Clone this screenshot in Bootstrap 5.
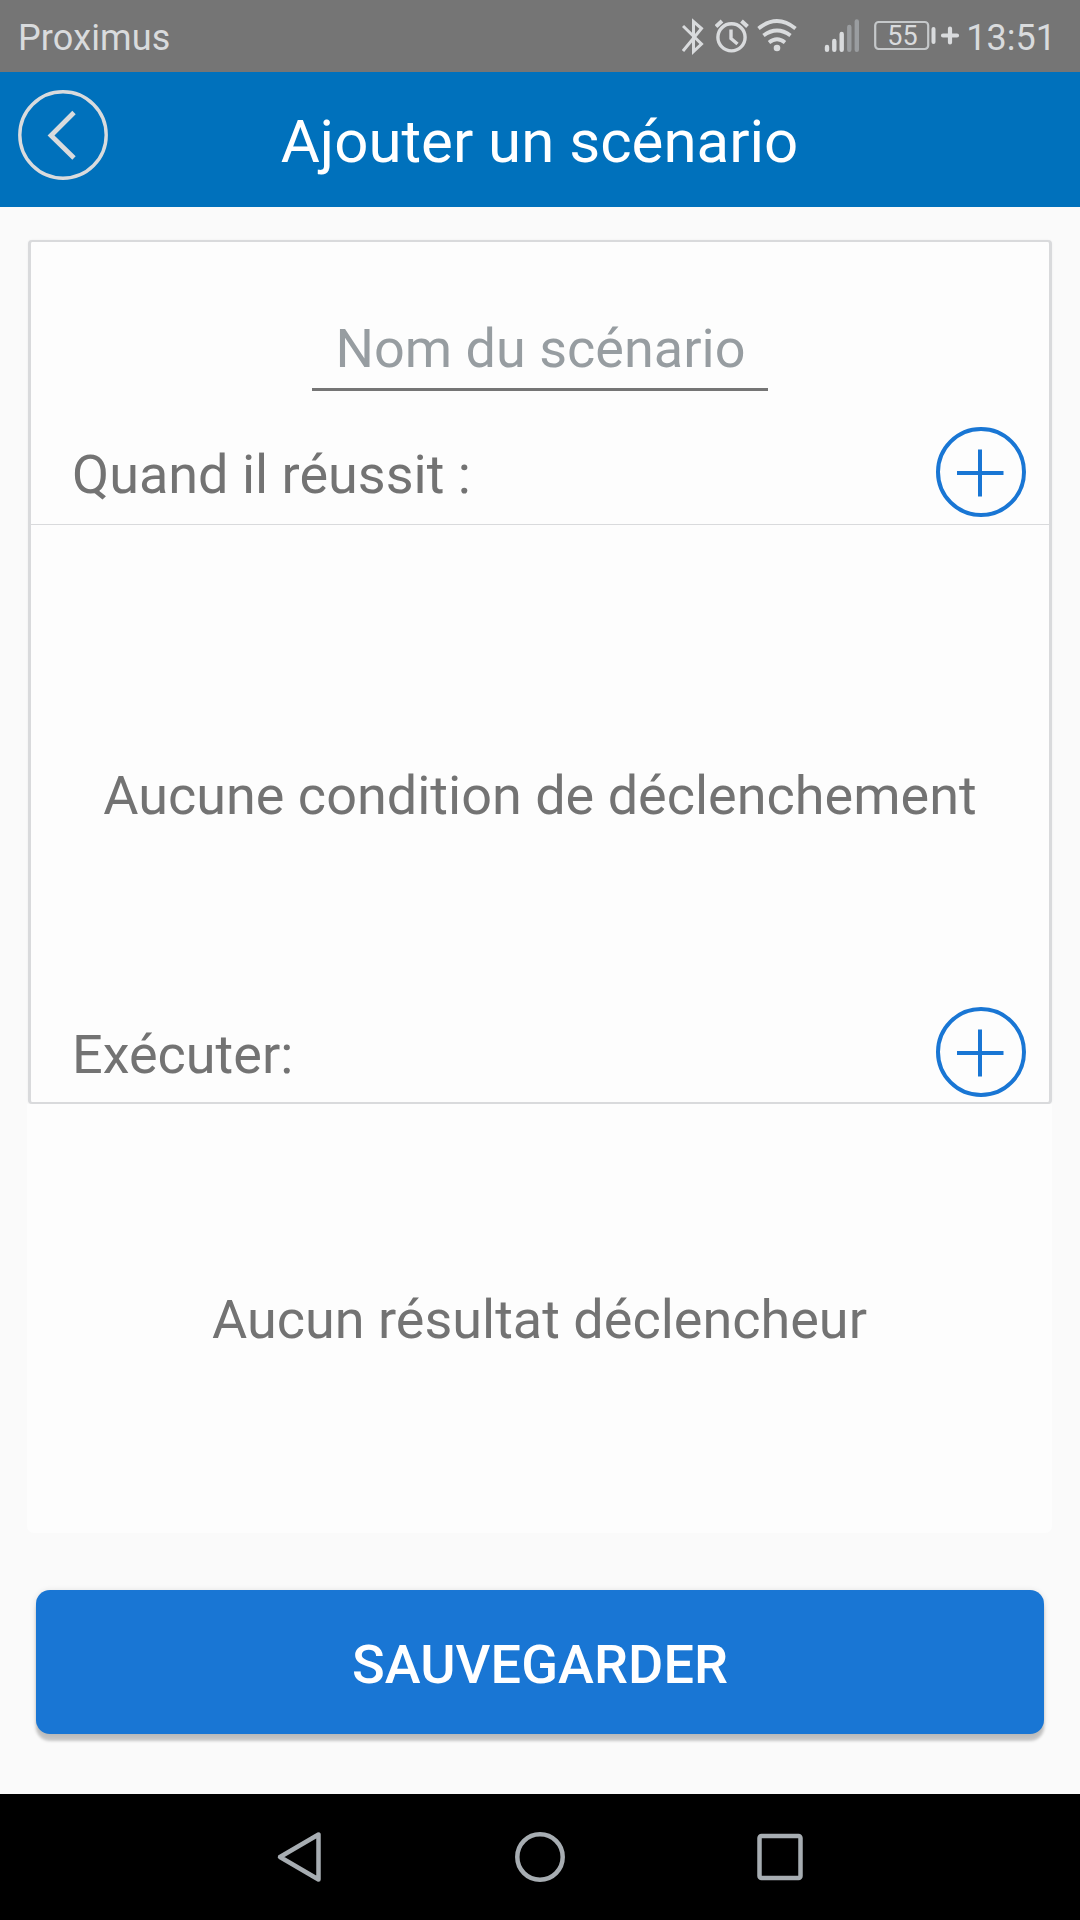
<!DOCTYPE html>
<html lang="fr">
<head>
<meta charset="utf-8">
<meta name="viewport" content="width=device-width, initial-scale=1">
<title>Ajouter un scénario</title>
<link href="https://cdn.jsdelivr.net/npm/bootstrap@5.3.0/dist/css/bootstrap.min.css" rel="stylesheet">
<style>
body { font-family: Roboto, "Liberation Sans", sans-serif; background: #fafafa; color: #737373; font-size: 54px; line-height: 64px; }
.screen { width: 1080px; height: 1920px; }
svg { display: block; flex: none; }
.status-bar { height: 72px; background: #757575; color: #d9dbdd; font-size: 36px; line-height: 72px; padding: 2px 24px 0 18px; }
.carrier { letter-spacing: .15px; }
.status-icons svg { height: 72px; margin-top: -2px; }
.app-header { height: 135px; background: #0071bc; color: #fff; padding: 18px; }
.app-header h1 { font-size: 60px; line-height: 99px; margin: 2px 91px 0 0; font-weight: 400; }
.round-btn { width: 90px; height: 90px; padding: 0; border: 0; background: none; }
.content-area { padding: 33px 27px 0; height: 1587px; }
.panel { background: #fdfdfd; }
.panel-top { margin: 0 1px; height: 864px; border: solid #d9dadc; border-width: 2px 3px; border-radius: 4px; box-shadow: 0 0 2px #ececec; }
.name-input { width: 456px; height: 86px; margin-top: 63px; padding: 4px 0 0 1px; border: 0; border-bottom: 3px solid #757575; background: none; color: #737373; text-align: center; line-height: 79px; }
.name-input::placeholder { color: #979da1; opacity: 1; }
.section-row { padding: 0 23px 0 41px; }
.section-row span { padding-top: 2px; }
.row-when { height: 134px; padding-top: 33px; border-bottom: 1px solid #d9dadc; }
.row-when .round-btn { margin-bottom: 4px; }
.row-run { height: 96px; }
.row-run .round-btn { margin-bottom: 5px; }
.empty-when { padding-top: 61px; }
.panel-bottom { height: 429px; margin-right: 1px; border-radius: 0 0 7px 7px; padding-top: 3px; }
.save-btn { margin: 57px 9px 0; height: 144px; width: 1008px; background: #1976d4; color: #fff; border: 0; border-radius: 14px; font-size: 54px; font-weight: 500; letter-spacing: .1px; line-height: 64px; padding: 6px 0 0; box-shadow: 0 7px 3px rgba(0,0,0,.2), 0 1px 6px rgba(0,0,0,.12); }
.nav-keys { height: 126px; background: #000; }
</style>
</head>
<body>
<div class="screen d-flex flex-column overflow-hidden">
  <div class="status-bar d-flex justify-content-between">
    <span class="carrier">Proximus</span>
    <div class="status-icons d-flex">
      <svg width="33" viewBox="682 0 33 72" fill="none" stroke="#d9dbdd" stroke-width="3"><path d="M683 26 701.5 44 693.5 51.5V21.5L701.5 28.5 683 51"/></svg>
      <svg width="42" viewBox="715 0 42 72" fill="none" stroke="#d9dbdd" stroke-width="3.4"><circle cx="731.5" cy="37.3" r="13.6"/><path d="M731 29.5V38.5L737.5 44"/><path d="M716 26.5 722 21M747.5 26.5 741.5 21" stroke-width="4"/></svg>
      <svg width="67" viewBox="757 0 67 72" fill="none" stroke="#d9dbdd" stroke-width="3.8"><path d="M758.5 28.5Q777 13.5 795.5 28.5M763.5 35.5Q777 25.5 790.5 35.5M769 42.5Q777 36 785 42.5"/><circle cx="777" cy="48" r="3.3" fill="#d9dbdd" stroke="none"/></svg>
      <svg width="50" viewBox="824 0 50 72" fill="none" stroke="#d9dbdd" stroke-width="4.4" stroke-linecap="round"><path d="M827 47V49.8M834.3 41V49.8M841.7 34V49.8"/><path d="M849.3 27V49.8M856.8 21.5V49.8" stroke="#9a9da0"/></svg>
      <svg width="92" viewBox="874 0 92 72" fill="none" stroke="#d9dbdd"><rect x="875.2" y="22" width="53" height="27" rx="3.5" stroke="#c5c8ca" stroke-width="2.2"/><path d="M933.5 29V42" stroke-width="4" stroke-linecap="round"/><path d="M943 35.5H957M950 28.5V42.5" stroke-width="4.2" stroke-linecap="round"/><text x="902.5" y="45" text-anchor="middle" font-size="27" fill="#d9dbdd" stroke="none">55</text></svg>
      <span>13:51</span>
    </div>
  </div>
  <header class="app-header d-flex">
    <button class="round-btn" aria-label="Retour"><svg width="90" height="90" fill="none" stroke="#d9dbdd"><circle cx="45" cy="45" r="43.2" stroke-width="3.4"/><path d="M56 22.5 33 45.5 56 68" stroke-width="4.8"/></svg></button>
    <h1 class="flex-grow-1 text-center">Ajouter un scénario</h1>
  </header>
  <main class="content-area">
    <section class="panel panel-top d-flex flex-column">
      <input class="name-input align-self-center" placeholder="Nom du scénario" aria-label="Nom du scénario">
      <div class="section-row row-when d-flex justify-content-between align-items-center">
        <span>Quand il réussit :</span>
        <button class="round-btn" aria-label="Ajouter une condition"><svg width="90" height="90" fill="none" stroke="#1976d4" stroke-width="4"><circle cx="45" cy="45" r="43"/><path d="M21 46H67.5M44 22.5V69.5"/></svg></button>
      </div>
      <div class="empty-when flex-grow-1 d-flex align-items-center justify-content-center"><span>Aucune condition de déclenchement</span></div>
      <div class="section-row row-run d-flex justify-content-between align-items-center">
        <span>Exécuter:</span>
        <button class="round-btn" aria-label="Ajouter une action"><svg width="90" height="90" fill="none" stroke="#1976d4" stroke-width="4"><circle cx="45" cy="45" r="43"/><path d="M21 46H67.5M44 22.5V69.5"/></svg></button>
      </div>
    </section>
    <section class="panel panel-bottom d-flex align-items-center justify-content-center"><span>Aucun résultat déclencheur</span></section>
    <button class="btn save-btn">SAUVEGARDER</button>
  </main>
  <nav class="nav-keys d-flex justify-content-center align-items-center">
    <svg width="1080" height="126" viewBox="0 1794 1080 126" fill="none" stroke="#a7adb2" stroke-width="4.5" stroke-linejoin="round"><path d="M280 1857 318.5 1834.5V1879.5Z"/><circle cx="540" cy="1857" r="22.7"/><rect x="759.5" y="1836" width="41" height="42" rx="2"/></svg>
  </nav>
</div>
<script src="https://cdn.jsdelivr.net/npm/bootstrap@5.3.0/dist/js/bootstrap.bundle.min.js"></script>
</body>
</html>
